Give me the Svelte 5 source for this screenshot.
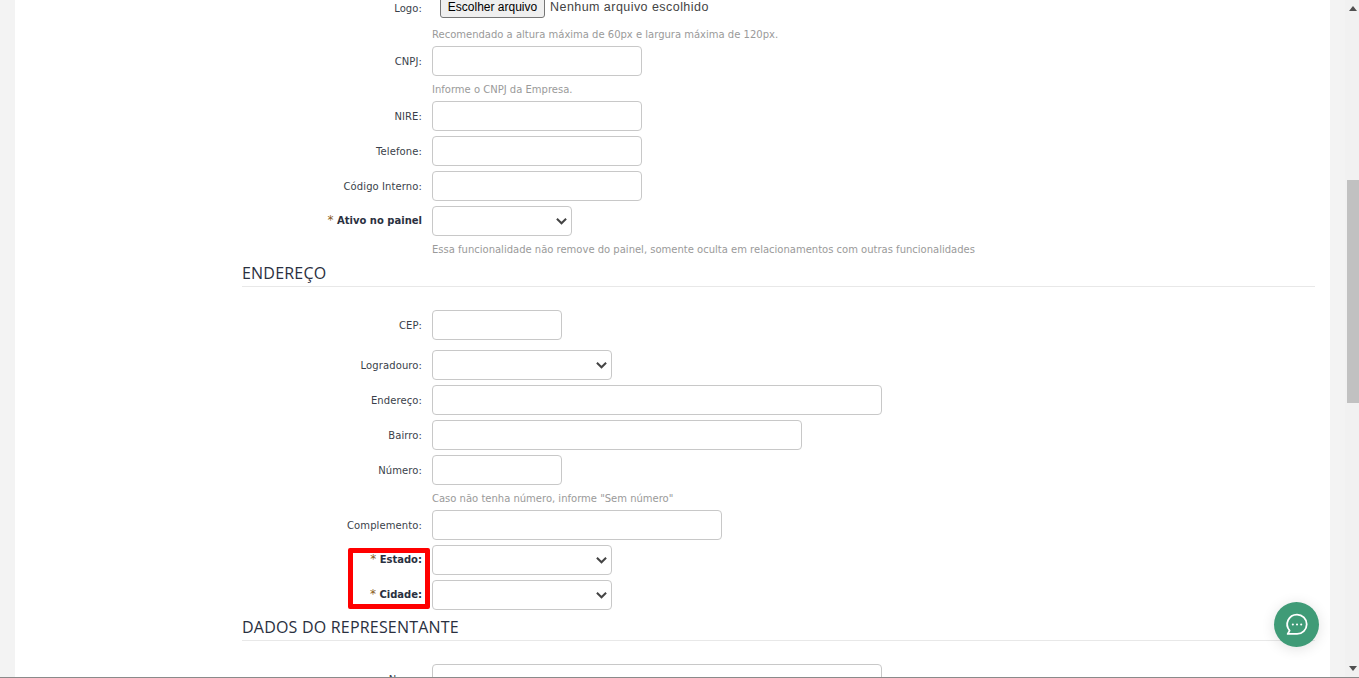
<script>
  const dados = [
    { label: 'CNPJ:', width: 210, help: 'Informe o CNPJ da Empresa.' },
    { label: 'NIRE:', width: 210 },
    { label: 'Telefone:', width: 210 },
    { label: 'Código Interno:', width: 210 },
    {
      label: 'Ativo no painel',
      width: 140,
      select: true,
      required: true,
      help: 'Essa funcionalidade não remove do painel, somente oculta em relacionamentos com outras funcionalidades'
    }
  ];

  const endereco = [
    { label: 'Logradouro:', width: 180, select: true },
    { label: 'Endereço:', width: 450 },
    { label: 'Bairro:', width: 370 },
    { label: 'Número:', width: 130, help: 'Caso não tenha número, informe "Sem número"' },
    { label: 'Complemento:', width: 290 }
  ];

  const local = [
    { label: 'Estado:', width: 180, select: true, required: true },
    { label: 'Cidade:', width: 180, select: true, required: true }
  ];
</script>

{#snippet row(f)}
  <div class="row">
    <label class="label" class:strong={f.required}>
      {#if f.required}<span class="req">*</span>{/if}
      {f.label}
    </label>
    <div class="field">
      {#if f.select}
        <div class="control select" style="width: {f.width}px">
          <svg viewBox="0 0 12 8" width="11" height="8" fill="none" stroke="#444" stroke-width="2.2">
            <path d="M1 1.5l5 5 5-5" />
          </svg>
        </div>
      {:else}
        <input class="control" type="text" style="width: {f.width}px" />
      {/if}
      {#if f.help}<p class="help">{f.help}</p>{/if}
    </div>
  </div>
{/snippet}

<div class="window">
  <div class="gutter"></div>
  <main class="page">
    <div class="row logo-row">
      <span class="label">Logo:</span>
      <div class="field">
        <div class="file">
          <button type="button">Escolher arquivo</button>
          <span>Nenhum arquivo escolhido</span>
        </div>
        <p class="help">Recomendado a altura máxima de 60px e largura máxima de 120px.</p>
      </div>
    </div>

    {#each dados as f}
      {@render row(f)}
    {/each}

    <h2>ENDEREÇO</h2>

    <div class="row cep">
      <span class="label">CEP:</span>
      <div class="field"><input class="control" type="text" style="width: 130px" /></div>
    </div>

    {#each endereco as f}
      {@render row(f)}
    {/each}

    <div class="local">
      {#each local as f}
        {@render row(f)}
      {/each}
      <div class="highlight"></div>
    </div>

    <h2>DADOS DO REPRESENTANTE</h2>

    <div class="row cep">
      <span class="label">Nome:</span>
      <div class="field"><input class="control" type="text" style="width: 450px" /></div>
    </div>
  </main>
  <div class="gutter right"></div>
  <div class="scrollbar">
    <svg class="arrow" viewBox="0 0 14 17" width="14" height="17"><path d="M4 11l4-5 4 5z" fill="#505050" /></svg>
    <div class="track"><div class="thumb"></div></div>
    <svg class="arrow" viewBox="0 0 14 17" width="14" height="17"><path d="M4 6l4 5 4-5z" fill="#505050" /></svg>
  </div>
  <button class="chat" type="button" aria-label="Chat">
    <svg viewBox="0 0 24 24" width="25" height="25" fill="none" stroke="#fff" stroke-width="1.7">
      <path d="M12.500 2.500a9.300 9.300 0 0 1 0 18.600H3.500l1.900-3.200A9.300 9.300 0 0 1 12.500 2.500z" stroke-linejoin="round" />
      <path d="M8.500 12h.01M12.500 12h.01M16.500 12h.01" stroke-linecap="round" stroke-width="2" />
    </svg>
  </button>
</div>

<style>
  :global(body) {
    margin: 0;
    overflow: hidden;
  }

  .window {
    position: relative;
    display: flex;
    height: 678px;
    overflow: hidden;
    background: #f3f3f3;
    font-family: "DejaVu Sans", Verdana, sans-serif;
    font-size: 10px;
    color: #3a3a3a;
    box-sizing: border-box;
    border-bottom: 1px solid #8a8a8a;
  }

  .gutter {
    width: 15px;
    flex: none;
  }

  .page {
    width: 1315px;
    flex: none;
    background: #fff;
    padding-left: 227px;
    padding-right: 15px;
    box-sizing: border-box;
  }

  .row {
    display: flex;
    align-items: flex-start;
    margin-bottom: 5px;
  }

  .logo-row {
    margin-top: -3px;
  }

  .cep {
    margin-bottom: 10px;
  }

  .label {
    width: 180px;
    height: 30px;
    flex: none;
    text-align: right;
    line-height: 31px;
    letter-spacing: 0.1px;
    white-space: nowrap;
    color: #3a3f4a;
  }

  .logo-row .label {
    height: 20px;
    line-height: 23px;
  }

  .strong {
    font-weight: 700;
    line-height: 28px;
    letter-spacing: 0;
    color: #2a3040;
  }

  .req {
    color: #8a5a20;
    font-weight: 400;
    font-size: 12px;
  }

  .field {
    margin-left: 10px;
    min-width: 0;
  }

  .control {
    display: block;
    height: 30px;
    box-sizing: border-box;
    border: 1px solid #c8c8c8;
    border-radius: 4px;
    background: #fff;
    padding: 0 8px;
    margin: 0;
  }

  .select {
    display: flex;
    align-items: center;
    justify-content: flex-end;
    padding-right: 4px;
  }

  .help {
    margin: 0;
    padding-top: 7px;
    line-height: 13px;
    color: #9a9a9a;
  }

  .file {
    display: flex;
    align-items: center;
    height: 20px;
    padding-left: 8px;
    margin-bottom: 4px;
    font-family: "Liberation Sans", Arial, sans-serif;
    font-size: 12.5px;
    letter-spacing: 0.45px;
    color: #444;
    white-space: nowrap;
  }

  .file button {
    height: 21px;
    width: 105px;
    padding: 0;
    margin-right: 5px;
    border: 1px solid #767676;
    border-radius: 3px;
    background: #efefef;
    color: #000;
    font: 12px "Liberation Sans", Arial, sans-serif;
  }

  h2 {
    margin: 7px 0 23px;
    padding-bottom: 3px;
    border-bottom: 1px solid #e8e8e8;
    font-family: "Open Sans", sans-serif;
    font-size: 16px;
    letter-spacing: 0.2px;
    line-height: 20px;
    font-weight: 400;
    color: #2a3040;
  }

  .local {
    position: relative;
  }

  .highlight {
    position: absolute;
    left: 106px;
    top: 3px;
    width: 82px;
    height: 61px;
    box-sizing: border-box;
    border: 5px solid #ff0000;
    border-radius: 2px;
  }

  .gutter.right {
    background: #f3f3f3;
  }

  .scrollbar {
    width: 14px;
    flex: none;
    display: flex;
    flex-direction: column;
    background: #f1f1f1;
  }

  .arrow {
    flex: none;
    display: block;
  }

  .track {
    flex: 1;
    padding-top: 163px;
    padding-left: 2px;
  }

  .thumb {
    height: 223px;
    background: #c1c1c1;
  }

  .chat {
    position: absolute;
    left: 1274px;
    top: 602px;
    width: 45px;
    height: 45px;
    padding: 0;
    border: 0;
    border-radius: 50%;
    background: #3f9b77;
    box-shadow: 0 2px 14px rgba(0, 0, 0, 0.12);
    display: flex;
    align-items: center;
    justify-content: center;
  }
</style>
